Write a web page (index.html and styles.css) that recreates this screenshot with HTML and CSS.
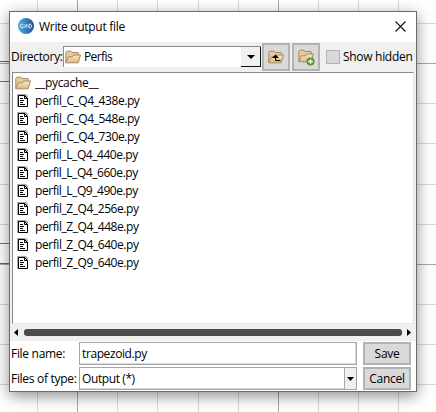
FILE: index.html
```
<!DOCTYPE html>
<html lang="en">
<head>
<meta charset="utf-8">
<title>Write output file</title>
<link rel="stylesheet" href="styles.css">
</head>
<body>
<svg class="canvas" width="436" height="412" shape-rendering="crispEdges">
  <path class="grid" d="M37.5 0V412M117.5 0V412M157.5 0V412M198.5 0V412M238.5 0V412M318.5 0V412M358.5 0V412M398.5 0V412M0 23.5H436M0 103.5H436M0 143.5H436M0 184.5H436M0 224.5H436M0 304.5H436M0 344.5H436M0 384.5H436"/>
  <path class="major" d="M77.5 0V412M278.5 0V412M0 63.5H436M0 264.5H436"/>
  <path class="blue" d="M0 61.5H10M0 263.5H10"/>
  <path class="magenta" d="M0 81.5H10M0 243.5H10"/>
</svg>
<svg class="defs" width="0" height="0">
  <defs>
    <linearGradient id="tan" x1="0" y1="0" x2="0" y2="1"><stop offset="0" stop-color="#f6e8c4"/><stop offset="1" stop-color="#d8bb87"/></linearGradient>
    <linearGradient id="brand" x1="0" y1="0" x2="1" y2="0"><stop offset="0" stop-color="#45b3dd"/><stop offset="1" stop-color="#344b9b"/></linearGradient>
    <symbol id="folder" viewBox="0 0 16 14">
      <path d="M.8 12.5V2.2L1.8 1.2H6L7 2.5H13L13.6 3.2V6" fill="#e4cb9b" stroke="#a98a5e"/>
      <path d="M.8 12.8L3.3 6.8H7.4L8.6 5H15.5L13.2 12.8Z" fill="url(#tan)" stroke="#a98a5e"/>
    </symbol>
    <symbol id="file" viewBox="0 0 11 13">
      <path d="M0 0H9L11 2V13H0Z" fill="#aaa"/>
      <path d="M1.5 1.5H7.5L10.5 4.5V12.5H1.5Z" fill="#fff" stroke="#000"/>
      <path d="M7.5 1.5V4.5H10.5M3 4.5H6M3 6.5H7M3 8.5H6M3 10.5H8" fill="none" stroke="#000"/>
    </symbol>
  </defs>
</svg>
<main class="dialog">
  <header class="titlebar">
    <svg class="logo" width="16" height="16" viewBox="0 0 16 16"><circle cx="8" cy="8" r="8" fill="url(#brand)"/><g fill="none" stroke="#e6f6ff"><path d="M5.3 6.3H3.4L2.5 7V9L3.4 9.7H5V8.2M11 6.3H12.5L13.5 7.2V8.8L12.5 9.7H11Z"/><path d="M7 6V10M9 6V10M7 8H9" stroke-opacity=".75"/></g></svg>
    <h1 class="title">Write output file</h1>
    <svg class="close" width="11" height="11" viewBox="0 0 11 11"><path d="M.5.5L10.5 10.5M10.5.5L.5 10.5" stroke="#111" stroke-width="1.1"/></svg>
  </header>
  <section class="toolbar">
    <span class="dirlabel">Directory:</span>
    <div class="dirbox">
      <svg width="16" height="14"><use href="#folder"/></svg>
      <span class="dirname">Perfis</span>
      <span class="drop"><svg width="8" height="4"><path d="M0 0H8L4 4Z"/></svg></span>
    </div>
    <button class="tool"><svg width="16" height="14" viewBox="0 0 16 14"><use href="#folder"/><path d="M7.5 6V10.5H12.5" fill="none" stroke="#000"/><path d="M7.5 4.5L11 8H4Z"/></svg></button>
    <button class="tool"><svg width="17" height="17" viewBox="0 0 17 17"><use href="#folder" width="16" height="14"/><circle cx="12.5" cy="12.5" r="4" fill="#56933a"/><path d="M12.5 10.2V14.8M10.2 12.5H14.8" stroke="#fff" stroke-width="1.4"/></svg></button>
    <span class="check"></span>
    <span class="hidden">Show hidden</span>
  </section>
  <section class="list">
    <div class="row"><svg class="fold" width="16" height="14"><use href="#folder"/></svg><span>__pycache__</span></div>
    <div class="row"><svg class="doc" width="11" height="13"><use href="#file"/></svg><span class="c">perfil_C_Q4_438e.py</span></div>
    <div class="row"><svg class="doc" width="11" height="13"><use href="#file"/></svg><span class="c">perfil_C_Q4_548e.py</span></div>
    <div class="row"><svg class="doc" width="11" height="13"><use href="#file"/></svg><span class="c">perfil_C_Q4_730e.py</span></div>
    <div class="row"><svg class="doc" width="11" height="13"><use href="#file"/></svg><span class="l">perfil_L_Q4_440e.py</span></div>
    <div class="row"><svg class="doc" width="11" height="13"><use href="#file"/></svg><span class="l">perfil_L_Q4_660e.py</span></div>
    <div class="row"><svg class="doc" width="11" height="13"><use href="#file"/></svg><span class="l">perfil_L_Q9_490e.py</span></div>
    <div class="row"><svg class="doc" width="11" height="13"><use href="#file"/></svg><span class="z">perfil_Z_Q4_256e.py</span></div>
    <div class="row"><svg class="doc" width="11" height="13"><use href="#file"/></svg><span class="z">perfil_Z_Q4_448e.py</span></div>
    <div class="row"><svg class="doc" width="11" height="13"><use href="#file"/></svg><span class="z">perfil_Z_Q4_640e.py</span></div>
    <div class="row"><svg class="doc" width="11" height="13"><use href="#file"/></svg><span class="z">perfil_Z_Q9_640e.py</span></div>
  </section>
  <div class="scroll">
    <svg width="4" height="7"><path d="M4 0V7L0 3.5Z"/></svg>
    <span class="thumb"></span>
    <svg width="4" height="7"><path d="M0 0V7L4 3.5Z"/></svg>
  </div>
  <section class="form">
    <span>File name:</span>
    <div class="field"><span class="value">trapezoid.py</span></div>
    <button class="action">Save</button>
    <span>Files of type:</span>
    <div class="field"><span class="value">Output (*)</span><span class="pick"><svg width="7" height="4"><path d="M0 0H7L3.5 4Z"/></svg></span></div>
    <button class="action">Cancel</button>
  </section>
</main>
</body>
</html>
```
FILE: styles.css
```
* { box-sizing: border-box; }
body {
  margin: 0;
  width: 436px;
  height: 412px;
  overflow: hidden;
  padding: 11px 0 0 9px;
  background: #fff;
  color: #000;
  font: 12px/16px "Open Sans", "Noto Sans", sans-serif;
  letter-spacing: -0.3px;
}
svg { display: block; flex: none; }
span { white-space: nowrap; }
button { font: inherit; letter-spacing: inherit; color: inherit; padding: 0; border-radius: 0; }
.canvas { position: absolute; left: 0; top: 0; }
.defs { position: absolute; }
.grid { stroke: #d9d9d9; }
.major { stroke: #a8a8a8; }
.blue { stroke: #5a56c4; }
.magenta { stroke: #c832c8; }
.dialog {
  position: relative;
  width: 408px;
  height: 381px;
  border: 1px solid #6b6b6b;
  background: #fff;
  box-shadow: 0 4px 14px rgba(0, 0, 0, .45);
}
.titlebar { display: flex; align-items: center; height: 30px; padding: 0 10px 0 8px; }
.logo { margin-top: -2px; }
.title { margin: -1px auto 0 5px; font-size: 12px; font-weight: 400; white-space: nowrap; }
.close { margin-top: -2px; }
.toolbar { display: flex; align-items: center; height: 30px; padding-left: 1px; background: #f0f0f0; }
.dirlabel { width: 52px; }
.dirbox {
  display: flex;
  align-items: center;
  width: 198px;
  height: 21px;
  margin-top: -1px;
  padding-left: 1px;
  border: solid #8a8a8a;
  border-width: 1px 0 0 1px;
  background: #fff;
}
.dirname { margin-left: 3px; letter-spacing: -0.6px; }
.drop {
  display: flex;
  align-items: center;
  justify-content: center;
  width: 20px;
  height: 20px;
  margin-left: auto;
  border: solid #111;
  border-width: 0 1px 1px 0;
  background: #f0f0f0;
}
.tool {
  display: flex;
  align-items: center;
  justify-content: center;
  width: 28px;
  height: 28px;
  margin-left: 1px;
  border: 2px solid #b2b2b2;
  background: #d9d9d9;
}
.tool + .tool { margin-left: 2px; }
.check { width: 14px; height: 14px; margin-left: 6px; border: 1px solid #b2b2b2; background: #d9d9d9; }
.hidden { margin-left: 3px; }
.list {
  width: 402px;
  height: 252px;
  margin-left: 2px;
  padding: 1px 0 0 2px;
  border: 1px solid #8a8a8a;
  border-right-color: #e3e3e3;
  border-bottom-color: #e3e3e3;
  box-shadow: 2px 0 #f0f0f0, -2px 0 #f0f0f0;
}
.row { display: flex; align-items: center; height: 18px; }
.fold { margin-right: 4px; }
.doc { margin: -1px 7px 0 2px; }
.c { letter-spacing: -0.42px; }
.l { letter-spacing: -0.44px; }
.z { letter-spacing: -0.43px; }
.scroll { display: flex; align-items: center; gap: 5px; height: 17px; padding: 0 5px 0 4px; background: #f0f0f0; }
.thumb { flex: 1; height: 7px; margin-left: 1px; border-radius: 3px; background: #4b4b4b; }
.form {
  display: grid;
  grid-template-columns: 68px 278px 54px;
  grid-template-rows: 23px 23px;
  row-gap: 2px;
  align-items: center;
  padding: 1px 0 0 1px;
}
.field { display: flex; align-items: center; height: 23px; padding-left: 2px; border: 1px solid #a5a5a5; box-shadow: inset -1px -1px #dcdcdc; }
.value { letter-spacing: -0.4px; }
.pick { display: flex; align-items: center; justify-content: center; width: 12px; height: 21px; margin-left: auto; border-left: 1px solid #aaa; background: #f0f0f0; }
.action { width: 48px; height: 23px; margin-left: 6px; border: 2px solid #b2b2b2; background: #d9d9d9; }
```
